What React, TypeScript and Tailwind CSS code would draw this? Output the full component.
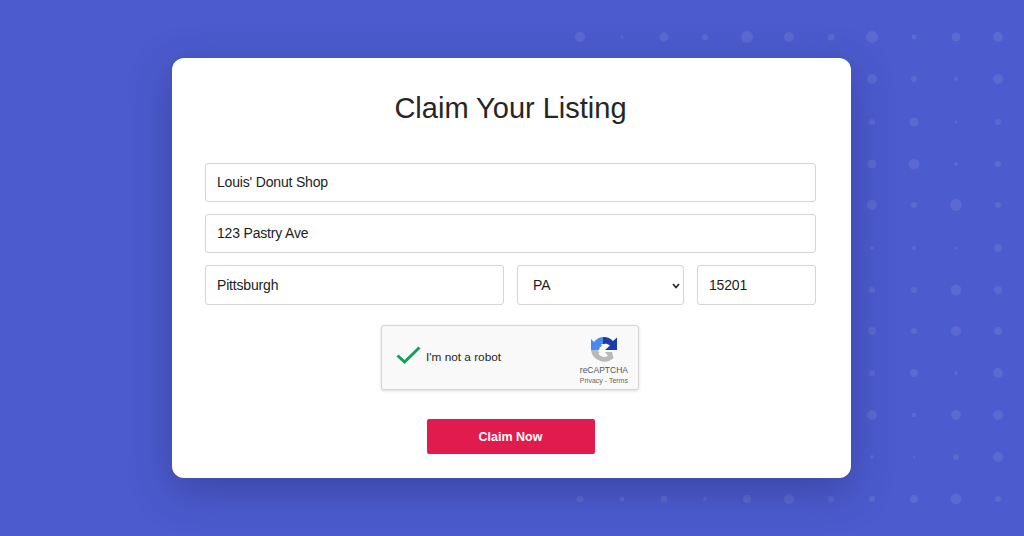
const cols = [580, 622, 664, 705, 747, 789, 831, 872, 914, 956, 998];
const rowsY = [37, 79, 122, 164, 205, 248, 290, 331, 373, 415, 457, 499];
const radii: number[][] = [
  [5, 1.5, 4.5, 3, 6, 5, 3.5, 6, 2.5, 4.5, 5],
  [0, 0, 0, 0, 0, 0, 0, 5, 3, 2, 5],
  [0, 0, 0, 0, 0, 0, 0, 3, 4.5, 1.5, 3],
  [0, 0, 0, 0, 0, 0, 0, 4.5, 5.5, 2, 3],
  [0, 0, 0, 0, 0, 0, 0, 5, 3, 6, 3],
  [0, 0, 0, 0, 0, 0, 0, 2, 2, 1.5, 4],
  [0, 0, 0, 0, 0, 0, 0, 3, 3, 5.5, 4],
  [0, 0, 0, 0, 0, 0, 0, 4, 3, 5, 4],
  [0, 0, 0, 0, 0, 0, 0, 3, 4, 2, 5],
  [0, 0, 0, 0, 0, 0, 0, 5, 2.5, 5, 5],
  [0, 0, 0, 0, 0, 0, 0, 2, 1, 3, 5],
  [3.5, 2.5, 3.5, 2, 4, 5, 3, 3, 4, 5.5, 3],
];

function Dots() {
  return (
    <svg className="absolute inset-0" width="1024" height="536" viewBox="0 0 1024 536">
      {rowsY.map((y, r) =>
        cols.map((x, c) =>
          radii[r][c] > 0 ? <circle key={`${r}-${c}`} cx={x} cy={y} r={radii[r][c]} fill="#ffffff" fillOpacity="0.085" /> : null
        )
      )}
    </svg>
  );
}

function Field({ value, className }: { value: string; className: string }) {
  return (
    <input
      readOnly
      value={value}
      className={`rounded-[3px] border border-[#d4d4d4] bg-white px-[11px] pb-[1px] text-[14px] tracking-[-0.18px] text-[#1c1c1c] outline-none ${className}`}
    />
  );
}

function RecaptchaLogo() {
  return (
    <svg width="28" height="28" viewBox="0 0 28 28">
      <path d="M14 1 A13 13 0 0 0 4 6 L1 3 V14 H9 L10 11 C12 11 12 9 11 8 L15 8 V1 Z" fill="#4a8af0" />
      <path d="M13 1 A13 13 0 0 1 23 5 L27 1.5 V14 H15 L20 9.5 C18 8 16 7.5 13 8 Z" fill="#1c3aa9" />
      <path d="M1 14 H8 C8 16 10 16 10 15 L8.5 18 A7.5 7.5 0 0 0 18 20 L15 16 H22 L23.5 22 A13.5 13.5 0 0 1 1 14 Z" fill="#b9b9b9" />
    </svg>
  );
}

export default function App() {
  return (
    <div
      className="relative h-[536px] w-[1024px] overflow-hidden bg-[#4c5bcd] pl-[172px] pt-[58px]"
      style={{ fontFamily: '"Liberation Sans", Arial, sans-serif' }}
    >
      <Dots />
      <div className="relative flex h-[420px] w-[679px] flex-col rounded-[12px] bg-white pl-[33px] pr-[35px] shadow-[0_12px_40px_rgba(40,45,120,0.45)]">
        <h1 className="mt-[31px] h-[38px] text-center text-[29px] leading-[38px] text-[#262626]">Claim Your Listing</h1>
        <div className="mt-[36px] flex flex-col gap-[12px]">
          <Field value="Louis' Donut Shop" className="h-[39px] w-full" />
          <Field value="123 Pastry Ave" className="h-[39px] w-full" />
          <div className="flex gap-[13px]">
            <Field value="Pittsburgh" className="h-[40px] w-[299px]" />
            <div className="relative h-[40px] w-[167px]">
              <select
                defaultValue="PA"
                className="h-full w-full appearance-none rounded-[3px] border border-[#d4d4d4] bg-white pl-[15px] text-[14px] text-[#1c1c1c] outline-none"
              >
                <option value="PA">PA</option>
              </select>
              <svg width="8" height="6" viewBox="0 0 8 6" className="pointer-events-none absolute left-[155px] top-[18px]">
                <path d="M1 1 L4 4.5 L7 1" fill="none" stroke="#222222" strokeWidth="1.6" />
              </svg>
            </div>
            <Field value="15201" className="h-[40px] w-[119px]" />
          </div>
        </div>
        <div className="ml-[176px] mt-[20px] flex h-[65px] w-[258px] items-center rounded-[3px] border border-[#d6d6d6] bg-[#f9f9f9] pl-[14px] pr-[10px] shadow-[0_1px_3px_rgba(0,0,0,0.15)]">
          <svg width="25" height="19" viewBox="0 0 25 19" className="mb-[4px] shrink-0">
            <path d="M1.5 9.5 L8.5 16 L23.5 1.5" fill="none" stroke="#14a05c" strokeWidth="3" />
          </svg>
          <span className="ml-[5px] text-[11.8px] text-[#1f1f1f]">I'm not a robot</span>
          <div className="ml-auto flex flex-col items-center pt-[6px]">
            <RecaptchaLogo />
            <span className="mt-[1px] text-[8.5px] leading-[11px] text-[#555555]">reCAPTCHA</span>
            <span className="text-[7px] leading-[9px] text-[#666666]">Privacy - Terms</span>
          </div>
        </div>
        <button className="mx-auto mt-[29px] h-[35px] w-[168px] rounded-[2px] bg-[#e11b4d] pt-[2px] text-[12.5px] font-bold text-white">
          Claim Now
        </button>
      </div>
    </div>
  );
}
